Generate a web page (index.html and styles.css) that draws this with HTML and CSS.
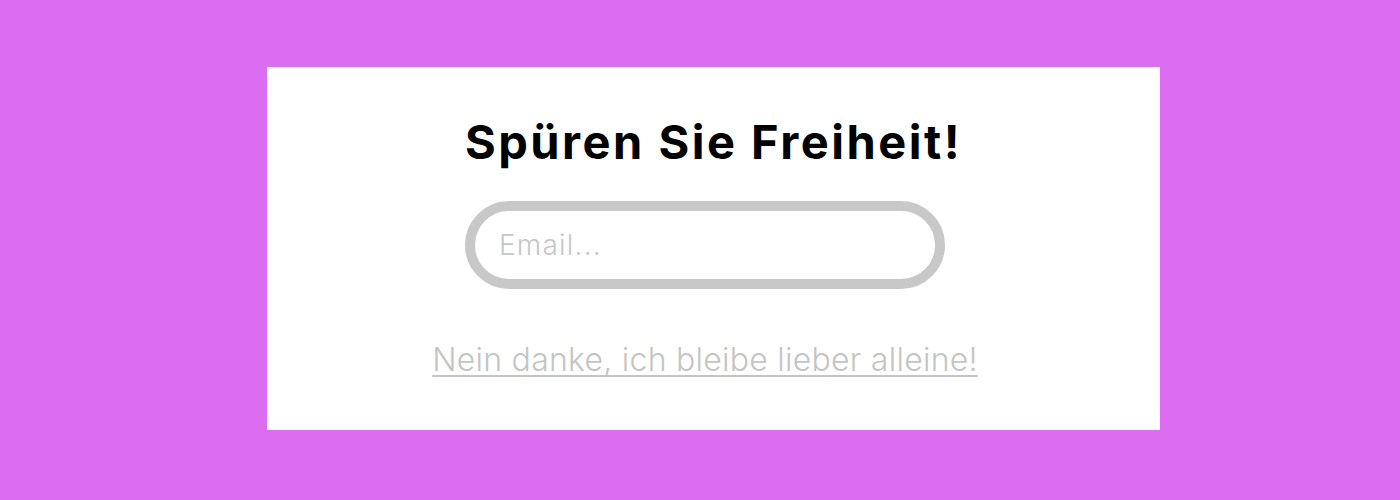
FILE: index.html
```html
<!DOCTYPE html>
<html lang="de">
<head>
<meta charset="utf-8">
<title>Spüren Sie Freiheit!</title>
<link rel="stylesheet" href="styles.css">
</head>
<body>
<div class="page">
  <div class="card">
    <h1 class="title">Spüren Sie Freiheit!</h1>
    <div class="field"><input class="email" type="text" placeholder="Email..."></div>
    <a class="dismiss" href="#">Nein danke, ich bleibe lieber alleine!</a>
  </div>
</div>
</body>
</html>
```
FILE: styles.css
```css
html, body {
  margin: 0;
  padding: 0;
  background: #dc6cf0;
  width: 1400px;
  height: 500px;
  overflow: hidden;
}
.page {
  padding: 67px 0 0 267px;
}
.card {
  width: 893px;
  height: 363px;
  background: #ffffff;
  box-sizing: border-box;
  display: flex;
  flex-direction: column;
  align-items: center;
  padding: 51px 17px 0 0;
  font-family: "Inter", "Liberation Sans", sans-serif;
}
.title {
  margin: 0 0 0 17px;
  font-size: 47px;
  font-weight: 700;
  color: #000;
  line-height: 1;
  letter-spacing: 2.5px;
}
.field {
  margin-top: 36px;
}
.email {
  display: block;
  width: 480px;
  height: 88px;
  box-sizing: border-box;
  border: 10px solid #c8c8c8;
  border-radius: 44px;
  padding: 0 24px;
  font-family: "Inter", "Liberation Sans", sans-serif;
  font-weight: 300;
  font-size: 28px;
  letter-spacing: 1.2px;
  outline: none;
  background: #fff;
}
.email::placeholder {
  color: #c6c6c6;
}
.dismiss {
  margin-top: 55px;
  font-size: 32px;
  font-weight: 300;
  line-height: 1;
  letter-spacing: 0.25px;
  color: #c4c4c4;
  text-decoration: underline;
  text-decoration-thickness: 1.5px;
  text-decoration-skip-ink: none;
  text-underline-offset: 4px;
}
```
